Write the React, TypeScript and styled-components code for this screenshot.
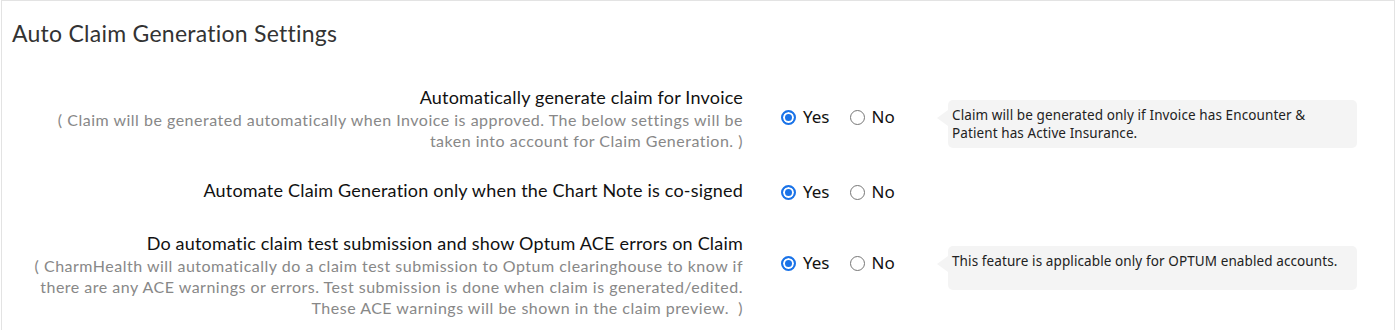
import React from 'react';
import styled, { createGlobalStyle } from 'styled-components';

const Global = createGlobalStyle`
  html, body { margin: 0; padding: 0; background: #fff; }
  body { font-family: Lato, "Noto Sans", sans-serif; }
`;

const Card = styled.section`
  margin-left: 1px;
  width: 1394px;
  box-sizing: border-box;
  min-height: 345px;
  border: 1px solid #e3e3e3;
  background: #fff;
`;

const Title = styled.h2`
  margin: 19px 0 0 10px;
  font: 400 23px/26px Lato, sans-serif;
  letter-spacing: 0.25px;
  color: #333;
`;

const Rows = styled.div`
  display: flex;
  flex-direction: column;
  gap: 29px;
  padding-top: 41px;
`;

const Row = styled.div`
  display: flex;
  align-items: flex-start;
`;

const LabelCol = styled.div`
  flex: none;
  width: 741px;
  text-align: right;
`;

const Label = styled.div`
  font: 400 18px/21px Lato, sans-serif;
  letter-spacing: 0.2px;
  color: #111;
`;

const Hint = styled.div`
  margin-top: 1px;
  font: 400 16px/21px Lato, sans-serif;
  letter-spacing: 0.5px;
  color: #888;
`;

const Choices = styled.div<{ $withHint: boolean }>`
  flex: none;
  display: flex;
  align-items: center;
  width: 156px;
  height: 24px;
  margin-left: 38px;
  margin-top: ${(p) => (p.$withHint ? 18 : 0)}px;
`;

const Option = styled.label`
  display: inline-flex;
  align-items: center;
  gap: 7px;
  margin-right: 20px;
  font: 400 17px/24px "Noto Sans", "Open Sans", sans-serif;
  color: #111;
  cursor: pointer;
`;

const RadioInput = styled.input`
  appearance: none;
  -webkit-appearance: none;
  box-sizing: border-box;
  width: 15px;
  height: 15px;
  margin: 0;
  border-radius: 50%;
  border: 1px solid #767676;
  background: #fff;
  &:checked {
    border: 2px solid #1a73e8;
    background: #1a73e8;
    box-shadow: inset 0 0 0 2px #fff;
  }
`;

const Note = styled.div`
  position: relative;
  flex: none;
  box-sizing: border-box;
  width: 409px;
  min-height: 44px;
  margin: 13px 0 0 11px;
  padding: 6px 8px 6px 4px;
  background: #f4f4f4;
  border-radius: 5px;
  font: 400 13.5px/18px "Noto Sans", "Open Sans", sans-serif;
  letter-spacing: 0.1px;
  color: #222;
  &::before {
    content: '';
    position: absolute;
    left: -11px;
    top: 10px;
    border-style: solid;
    border-width: 8px 11px 8px 0;
    border-color: transparent #f4f4f4 transparent transparent;
  }
`;

type Setting = {
  id: string;
  label: string;
  hint?: React.ReactNode;
  note?: React.ReactNode;
};

const settings: Setting[] = [
  {
    id: 'invoice',
    label: 'Automatically generate claim for Invoice',
    hint: (
      <>
        ( Claim will be generated automatically when Invoice is approved. The below settings will be
        <br />
        taken into account for Claim Generation. )
      </>
    ),
    note: (
      <>
        Claim will be generated only if Invoice has Encounter &amp;
        <br />
        Patient has Active Insurance.
      </>
    ),
  },
  {
    id: 'cosign',
    label: 'Automate Claim Generation only when the Chart Note is co-signed',
  },
  {
    id: 'ace',
    label: 'Do automatic claim test submission and show Optum ACE errors on Claim',
    hint: (
      <>
        ( CharmHealth will automatically do a claim test submission to Optum clearinghouse to know if
        <br />
        there are any ACE warnings or errors. Test submission is done when claim is generated/edited.
        <br />
        These ACE warnings will be shown in the claim preview.&nbsp; )
      </>
    ),
    note: <>This feature is applicable only for OPTUM enabled accounts.</>,
  },
];

export default function App() {
  return (
    <>
      <Global />
      <Card>
        <Title>Auto Claim Generation Settings</Title>
        <Rows>
          {settings.map((s) => (
            <Row key={s.id}>
              <LabelCol>
                <Label>{s.label}</Label>
                {s.hint && <Hint>{s.hint}</Hint>}
              </LabelCol>
              <Choices $withHint={!!s.hint}>
                <Option>
                  <RadioInput type="radio" name={s.id} defaultChecked />
                  Yes
                </Option>
                <Option>
                  <RadioInput type="radio" name={s.id} />
                  No
                </Option>
              </Choices>
              {s.note && <Note>{s.note}</Note>}
            </Row>
          ))}
        </Rows>
      </Card>
    </>
  );
}
